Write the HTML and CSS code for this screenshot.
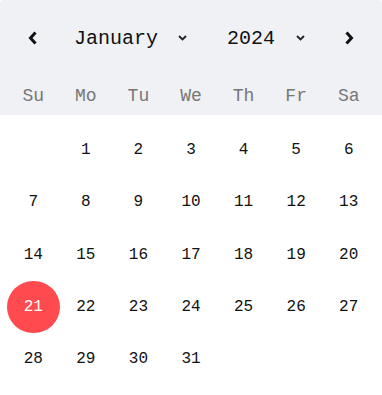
FILE: index.html
```html
<!DOCTYPE html>
<html lang="en">
<head>
    <meta charset="UTF-8">
    <meta name="viewport" content="width=device-width, initial-scale=1.0">
    <title>Calendar</title>
    <link rel="stylesheet" href="styles.css">
</head>
<body>
    <div class="calendario">
        <div class="topo">
            <div class="nav">
                <button class="seta">
                    <svg width="10" height="14" viewBox="0 0 10 14"><path d="M7.5 1.5 L2.5 7 L7.5 12.5" fill="none" stroke="#111" stroke-width="3"/></svg>
                </button>
                <div class="selects">
                    <div class="select mes">
                        <span>January</span>
                        <svg width="9" height="6" viewBox="0 0 9 6"><path d="M1 1 L4.5 4.5 L8 1" fill="none" stroke="#222" stroke-width="1.8"/></svg>
                    </div>
                    <div class="select ano">
                        <span>2024</span>
                        <svg width="9" height="6" viewBox="0 0 9 6"><path d="M1 1 L4.5 4.5 L8 1" fill="none" stroke="#222" stroke-width="1.8"/></svg>
                    </div>
                </div>
                <button class="seta prox">
                    <svg width="10" height="14" viewBox="0 0 10 14"><path d="M2.5 1.5 L7.5 7 L2.5 12.5" fill="none" stroke="#111" stroke-width="3"/></svg>
                </button>
            </div>
            <div class="semana">
                <span>Su</span><span>Mo</span><span>Tu</span><span>We</span><span>Th</span><span>Fr</span><span>Sa</span>
            </div>
        </div>
        <div class="dias">
            <span></span><span>1</span><span>2</span><span>3</span><span>4</span><span>5</span><span>6</span>
            <span>7</span><span>8</span><span>9</span><span>10</span><span>11</span><span>12</span><span>13</span>
            <span>14</span><span>15</span><span>16</span><span>17</span><span>18</span><span>19</span><span>20</span>
            <span class="hoje">21</span><span>22</span><span>23</span><span>24</span><span>25</span><span>26</span><span>27</span>
            <span>28</span><span>29</span><span>30</span><span>31</span>
        </div>
    </div>
</body>
</html>
```

FILE: styles.css
```css
body, html{
    margin: 0;
    padding: 0;
    background-color: white;
}
.calendario{
    width: 382px;
    font-family: "Liberation Mono", "DejaVu Sans Mono", monospace;
    color: #111;
}
.topo{
    background-color: #f0f1f5;
    border-radius: 4px 4px 0 0;
    padding: 12px 7px 0 7px;
    height: 103px;
}
.nav{
    display: flex;
    align-items: center;
    height: 52px;
}
.seta{
    width: 52px;
    height: 52px;
    border: none;
    background-color: transparent;
    display: flex;
    align-items: center;
    justify-content: center;
    padding: 0;
}
.prox{
    margin-left: auto;
}
.selects{
    display: flex;
    align-items: center;
    gap: 40px;
    margin-left: 15px;
}
.select{
    display: flex;
    align-items: center;
    font-size: 20px;
}
.mes{
    gap: 20px;
}
.ano{
    gap: 21px;
}
.semana{
    display: grid;
    grid-template-columns: repeat(7, 1fr);
    margin-top: 13px;
    height: 38px;
    align-items: center;
    text-align: center;
    font-size: 18px;
    color: #777;
}
.dias{
    display: grid;
    grid-template-columns: repeat(7, 1fr);
    grid-auto-rows: 52.3px;
    padding: 9px 7px 0 7px;
    font-size: 16px;
}
.dias span{
    display: flex;
    align-items: center;
    justify-content: center;
}
.hoje{
    background-color: #ff4b4f;
    color: white;
    border-radius: 50%;
}
```
